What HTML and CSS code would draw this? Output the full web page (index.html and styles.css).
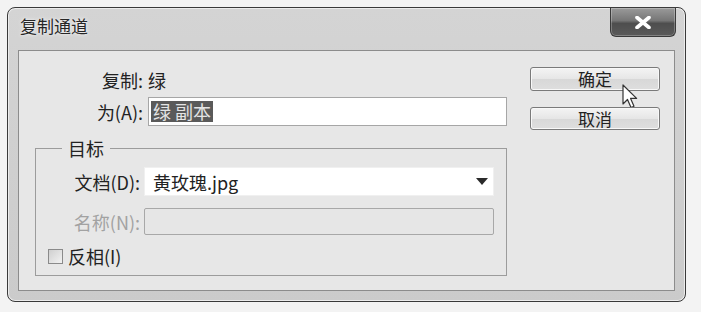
FILE: index.html
```html
<!DOCTYPE html>
<html lang="zh-CN">
<head>
<meta charset="utf-8">
<title>复制通道</title>
<link rel="stylesheet" href="styles.css">
</head>
<body>
<div class="window">
  <div class="titlebar">
    <div class="title">复制通道</div>
    <div class="close">
      <svg width="18" height="13" viewBox="0 0 18 13"><path d="M3 1.5 L15 11.5 M15 1.5 L3 11.5" stroke="#ffffff" stroke-width="3.6" stroke-linecap="round"/></svg>
    </div>
  </div>
  <div class="panel">
    <div class="form">
      <div class="row row-info">
        <span class="label">复制:</span>
        <span class="value">绿</span>
      </div>
      <div class="row row-input">
        <span class="label">为(A):</span>
        <div class="input"><span class="sel">绿 副本</span></div>
      </div>
      <fieldset class="group">
        <legend>目标</legend>
        <div class="grow grow-doc">
          <span class="glabel">文档(D):</span>
          <div class="select">
            <span class="select-text">黄玫瑰.jpg</span>
            <span class="caret"></span>
          </div>
        </div>
        <div class="grow grow-name">
          <span class="glabel disabled">名称(N):</span>
          <div class="dinput"></div>
        </div>
        <div class="check-row">
          <span class="checkbox"></span>
          <span class="check-label">反相(I)</span>
        </div>
      </fieldset>
    </div>
    <div class="buttons">
      <div class="btn btn-ok">确定
        <svg class="cursor" width="16" height="26" viewBox="0 0 16 26"><path d="M1 1 L1 20 L5.5 15.5 L9 23.5 L12 22.2 L8.6 14.4 L14.6 14.4 Z" fill="#ffffff" stroke="#333333" stroke-width="1.2" stroke-linejoin="round"/></svg>
      </div>
      <div class="btn">取消</div>
    </div>
  </div>
</div>
</body>
</html>
```
FILE: styles.css
```css
* { box-sizing: border-box; }
html, body { margin: 0; padding: 0; }
body {
  width: 701px;
  height: 312px;
  background: #f3f3f3;
  font-family: "Noto Sans CJK SC", "Noto Sans", sans-serif;
  font-size: 18px;
  color: #222222;
  overflow: hidden;
}
.window {
  margin: 7px 0 0 7px;
  width: 679px;
  height: 295px;
  border: 1px solid #3a3a3a;
  border-radius: 8px;
  background: linear-gradient(#d4d4d4, #cbcbcb);
  box-shadow: inset 0 0 0 1px #ececec;
  display: flex;
  flex-direction: column;
  padding: 0 10px 10px 10px;
}
.titlebar {
  height: 42px;
  display: flex;
  align-items: flex-start;
}
.title {
  margin: 7px 0 0 2px;
  line-height: 22px;
  font-size: 17px;
  color: #262626;
  text-shadow: 0 0 4px #f2f2f2, 0 0 2px #f2f2f2;
}
.close {
  margin-left: auto;
  margin-right: -1px;
  width: 66px;
  height: 29px;
  border: 1px solid #3a3a3a;
  border-top: none;
  border-radius: 0 0 6px 6px;
  background: linear-gradient(#9a9a9a 0%, #767676 45%, #4e4e4e 55%, #5a5a5a 100%);
  box-shadow: inset 0 0 0 1px rgba(255,255,255,0.25);
  display: flex;
  align-items: center;
  justify-content: center;
}
.panel {
  flex: 1;
  border: 1px solid #8c8c8c;
  background: #e7e7e7;
  display: flex;
  padding-left: 16px;
}
.form {
  width: 472px;
  padding-top: 19px;
}
.row {
  display: flex;
  align-items: center;
}
.row-info { height: 20px; }
.row-input { margin-top: 7px; height: 29px; }
.label {
  width: 108px;
  text-align: right;
  line-height: 20px;
}
.value { margin-left: 5px; line-height: 20px; }
.input {
  margin-left: 5px;
  width: 359px;
  height: 29px;
  background: #ffffff;
  border: 1px solid #a6a6a6;
  display: flex;
  align-items: center;
  padding-left: 2px;
}
.sel {
  background: #5a5a5a;
  color: #e4e4e4;
  line-height: 21px;
  padding: 0 2px;
}
.group {
  margin: 12px 0 0 0;
  padding: 0 0 9px 0;
  border: 1px solid #9c9c9c;
  min-width: 0;
}
.group legend {
  margin-left: 26px;
  padding: 0 6px;
  line-height: 20px;
}
.grow {
  display: flex;
  align-items: center;
}
.grow-doc { margin-top: 9px; height: 29px; }
.grow-name { margin-top: 12px; height: 27px; }
.glabel {
  width: 104px;
  text-align: right;
  line-height: 20px;
}
.glabel.disabled { color: #a2a2a2; }
.select {
  margin-left: 4px;
  width: 350px;
  height: 29px;
  background: #ffffff;
  border: 1px solid #f0f0f0;
  display: flex;
  align-items: center;
  padding: 0 5px 0 8px;
}
.select-text { flex: 1; }
.caret {
  width: 0;
  height: 0;
  border-left: 6px solid transparent;
  border-right: 6px solid transparent;
  border-top: 7px solid #2a2a2a;
}
.dinput {
  margin-left: 4px;
  width: 350px;
  height: 27px;
  background: #e6e6e6;
  border: 1px solid #a8a8a8;
  border-radius: 2px;
}
.check-row {
  margin-top: 11px;
  height: 20px;
  display: flex;
  align-items: center;
  padding-left: 12px;
}
.checkbox {
  width: 15px;
  height: 15px;
  border: 1px solid #8a8a8a;
  background: linear-gradient(135deg, #cfcfcf, #f2f2f2);
}
.check-label { margin-left: 5px; line-height: 20px; }
.buttons {
  margin-left: 23px;
  width: 130px;
  padding-top: 16px;
  display: flex;
  flex-direction: column;
  gap: 16px;
}
.btn {
  position: relative;
  height: 23px;
  border: 1px solid #7a7a7a;
  border-radius: 3px;
  background: linear-gradient(#f4f4f4 0%, #e6e6e6 50%, #d8d8d8 51%, #dedede 100%);
  box-shadow: inset 0 0 0 1px #f8f8f8;
  display: flex;
  align-items: center;
  justify-content: center;
  font-size: 17px;
  line-height: 20px;
}
.btn-ok { height: 24px; }
.cursor {
  position: absolute;
  left: 91px;
  top: 16px;
}
```
